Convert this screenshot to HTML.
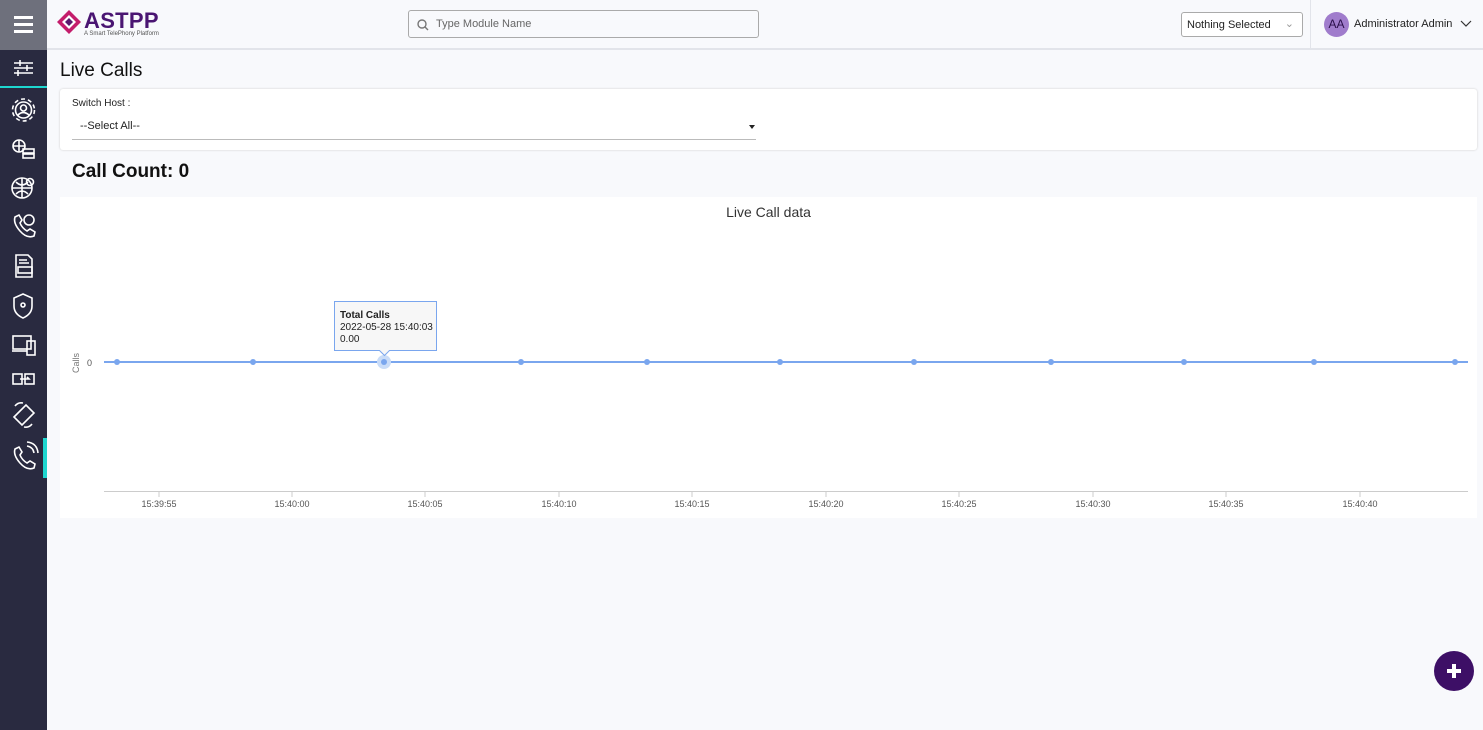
<!DOCTYPE html>
<html><head><meta charset="utf-8"><style>
*{box-sizing:border-box;margin:0;padding:0}
body{width:1483px;height:730px;background:#f8f9fc;font-family:"Liberation Sans",sans-serif;position:relative;overflow:hidden;color:#222}
.sb{position:absolute;left:0;top:0;width:47px;height:730px;background:#292a40}
.hb{position:absolute;left:0;top:0;width:47px;height:50px;background:#6e707c}
.hb i{position:absolute;left:14px;width:19px;height:3px;background:#fff}
.top{position:absolute;left:47px;top:0;right:0;height:50px;background:#f8f9fc;border-bottom:2px solid #e2e4ea}
</style></head><body>
<div class="sb">
<div class="hb"><i style="top:16px"></i><i style="top:23px"></i><i style="top:30px"></i></div>
<div style="position:absolute;left:0;top:86px;width:47px;height:2px;background:#1ed7d0"></div>
<div style="position:absolute;left:43px;top:438px;width:4px;height:40px;background:#1ed7d0"></div>
<svg width="47" height="480" style="position:absolute;left:0;top:50px" fill="none" stroke="#fff" stroke-width="1.6">
<g><path d="M14 13h19M14 18h19M14 23h19M20 10v6M27 15v6M18 20v6"/></g>
<g><circle cx="23.5" cy="60" r="8"/><circle cx="23.5" cy="58" r="3"/><path d="M18 65q5-5 11 0"/><circle cx="23.5" cy="60" r="11" stroke-dasharray="4 3"/></g>
<g><circle cx="19" cy="96" r="6"/><path d="M13 96h12M19 90v12"/><rect x="23" y="99" width="11" height="4"/><rect x="23" y="104" width="11" height="4"/></g>
<g><circle cx="22" cy="138" r="10"/><path d="M12 138h20M22 128v20M16 132q6 6 12 0M16 144q6-6 12 0"/><circle cx="30" cy="132" r="3.5"/></g>
<g><path d="M15 167q-2 6 5 14t14 5l1-4-5-3-3 2q-5-3-7-8l2-3-3-5z"/><circle cx="29" cy="170" r="5"/></g>
<g><path d="M16 205h12l4 4v18H16z"/><rect x="18" y="217" width="14" height="6"/><path d="M19 210h8M19 213h10"/></g>
<g><path d="M23 244l9 4v8q0 8-9 12q-9-4-9-12v-8z"/><circle cx="23" cy="255" r="2"/></g>
<g><rect x="13" y="286" width="18" height="13"/><rect x="27" y="291" width="8" height="14"/><path d="M12 301h15"/></g>
<g><rect x="13" y="324" width="9" height="10"/><rect x="25" y="324" width="9" height="10"/><path d="M20 329h9l-2-2"/></g>
<g><path d="M14 367l12-12 8 8-12 12z"/><path d="M15 356q3-4 8-3M32 374q-3 4-8 3"/></g>
<g><path d="M15 399q-2 6 5 14t14 5l1-4-5-3-3 2q-5-3-7-8l2-3-3-5z"/><path d="M27 396q6 1 7 7M27 392q10 1 11 11"/></g>
</svg>
</div>
<div class="top">
<svg width="26" height="26" style="position:absolute;left:9px;top:9px"><path d="M13 1l12 12-12 12L1 13z" fill="#c41d6b"/><path d="M13 6l7 7-7 7-7-7z" fill="#fff"/><path d="M13 9l4 4-4 4-4-4z" fill="#5a1a6e"/></svg>
<div style="position:absolute;left:37px;top:8px;font-size:22px;font-weight:bold;color:#4a1572;letter-spacing:0.3px">ASTPP</div>
<div style="position:absolute;left:37px;top:31px;font-size:6px;color:#555">A Smart TelePhony Platform</div>
<div style="position:absolute;left:361px;top:10px;width:351px;height:28px;border:1px solid #aaa;border-radius:3px;background:#f8f9fc;font-size:11px;color:#666;padding:7px 0 0 27px">Type Module Name
<svg width="12" height="12" style="position:absolute;left:8px;top:8px" fill="none" stroke="#777" stroke-width="1.4"><circle cx="5" cy="5" r="4"/><path d="M8 8l3 3"/></svg></div>
<div style="position:absolute;left:1134px;top:12px;width:122px;height:25px;border:1px solid #aaa;border-radius:3px;background:#fff;font-size:11px;color:#222;padding:6px 5px">Nothing Selected<span style="position:absolute;right:8px;top:4px;color:#999">&#8964;</span></div>
<div style="position:absolute;left:1263px;top:0;width:1px;height:48px;background:#e2e4ea"></div>
<div style="position:absolute;left:1277px;top:12px;width:25px;height:25px;border-radius:50%;background:#a07ccc;color:#2a0f4a;font-size:12px;text-align:center;line-height:25px">AA</div>
<div style="position:absolute;left:1307px;top:18px;font-size:11px;color:#222">Administrator Admin</div>
<svg width="12" height="8" style="position:absolute;left:1413px;top:20px" fill="none" stroke="#333" stroke-width="1.2"><path d="M1 1l5 5 5-5"/></svg>
</div>
<div style="position:absolute;left:60px;top:60px;font-size:19px;color:#111">Live Calls</div>
<div style="position:absolute;left:60px;top:89px;width:1417px;height:61px;background:#fff;border-radius:3px;box-shadow:0 0 2px #ccc">
<div style="position:absolute;left:12px;top:9px;font-size:10px">Switch Host :</div>
<div style="position:absolute;left:20px;top:31px;font-size:11px">--Select All--</div>
<div style="position:absolute;left:689px;top:36px;border:3.5px solid transparent;border-top:4px solid #222"></div>
<div style="position:absolute;left:12px;top:50px;width:684px;height:1px;background:#bbb"></div>
</div>
<div style="position:absolute;left:72px;top:161px;font-size:19px;font-weight:bold;color:#111">Call Count: 0</div>
<div style="position:absolute;left:60px;top:197px;width:1417px;height:321px;background:#fff">
<div style="position:absolute;left:0;width:100%;top:7px;text-align:center;font-size:14px;color:#333">Live Call data</div>
</div>
<svg width="1483" height="730" style="position:absolute;left:0;top:0" font-family="Liberation Sans" font-size="9" fill="#555">
<text x="0" y="0" transform="translate(79,373) rotate(-90)" fill="#777">Calls</text>
<text x="87" y="366">0</text>
<path d="M104 362H1468" stroke="#7aa6ee" stroke-width="2"/>
<path d="M104 491.5H1468" stroke="#ccc"/>
<g fill="#7aa6ee"><circle cx="117" cy="362" r="3"/><circle cx="253" cy="362" r="3"/><circle cx="384" cy="362" r="7" fill="#c9dcf8"/><circle cx="384" cy="362" r="3"/><circle cx="521" cy="362" r="3"/><circle cx="647" cy="362" r="3"/><circle cx="780" cy="362" r="3"/><circle cx="914" cy="362" r="3"/><circle cx="1051" cy="362" r="3"/><circle cx="1184" cy="362" r="3"/><circle cx="1314" cy="362" r="3"/><circle cx="1455" cy="362" r="3"/></g>
<g stroke="#ccc"><path d="M159 492v5M292 492v5M425 492v5M559 492v5M692 492v5M826 492v5M959 492v5M1093 492v5M1226 492v5M1360 492v5"/></g>
<g text-anchor="middle"><text x="159" y="507">15:39:55</text><text x="292" y="507">15:40:00</text><text x="425" y="507">15:40:05</text><text x="559" y="507">15:40:10</text><text x="692" y="507">15:40:15</text><text x="826" y="507">15:40:20</text><text x="959" y="507">15:40:25</text><text x="1093" y="507">15:40:30</text><text x="1226" y="507">15:40:35</text><text x="1360" y="507">15:40:40</text></g>
<path d="M334.5 301.5h102v49h-47l-5 5-5-5h-45z" fill="#f7f7f7" stroke="#7aa6ee"/>
<g font-size="10" fill="#222"><text x="340" y="318" font-weight="bold">Total Calls</text><text x="340" y="330">2022-05-28 15:40:03</text><text x="340" y="342">0.00</text></g>
</svg>
<div style="position:absolute;left:1434px;top:651px;width:40px;height:40px;border-radius:50%;background:#3d0f66"><div style="position:absolute;left:13px;top:18px;width:14px;height:4px;background:#fff"></div><div style="position:absolute;left:18px;top:13px;width:4px;height:14px;background:#fff"></div></div>
</body></html>
